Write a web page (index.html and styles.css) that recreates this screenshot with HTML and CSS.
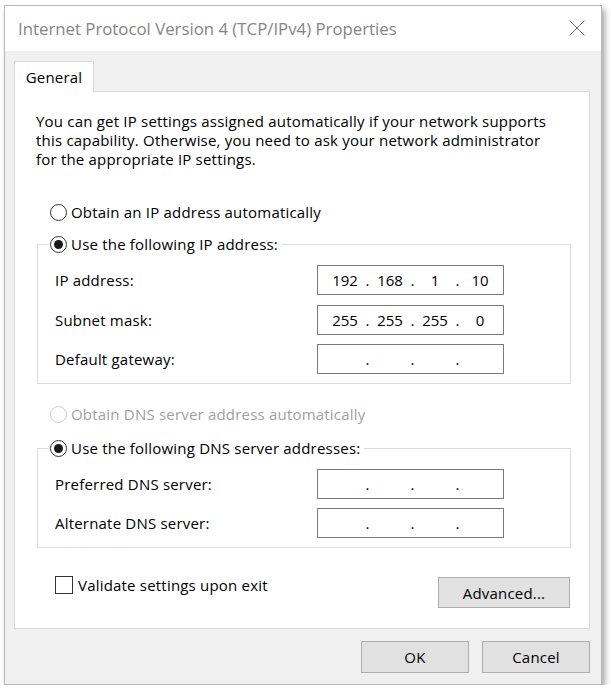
FILE: index.html
```html
<!DOCTYPE html>
<html>
<head>
<meta charset="utf-8">
<link rel="stylesheet" href="styles.css">
</head>
<body>
<div class="window">
  <div class="titlebar">
    <div class="title">Internet Protocol Version 4 (TCP/IPv4) Properties</div>
    <svg class="close" width="18" height="18" viewBox="0 0 18 18"><path d="M1.5 1.5 L16.5 16.5 M16.5 1.5 L1.5 16.5" stroke="#6b6b6b" stroke-width="1" fill="none"/></svg>
  </div>
  <div class="body">
    <div class="tabs"><div class="tab">General</div></div>
    <div class="panel">
      <p class="intro">You can get IP settings assigned automatically if your network supports this capability. Otherwise, you need to ask your network administrator for the appropriate IP settings.</p>
      <div class="radio-row first"><span class="radio"></span><span>Obtain an IP address automatically</span></div>
      <fieldset class="group g1">
        <legend><span class="radio on"></span><span>Use the following IP address:</span></legend>
        <div class="row"><span class="lbl">IP address:</span><div class="ip"><span class="n">192</span><span class="d">.</span><span class="n">168</span><span class="d">.</span><span class="n">1</span><span class="d">.</span><span class="n">10</span></div></div>
        <div class="row"><span class="lbl">Subnet mask:</span><div class="ip"><span class="n">255</span><span class="d">.</span><span class="n">255</span><span class="d">.</span><span class="n">255</span><span class="d">.</span><span class="n">0</span></div></div>
        <div class="row"><span class="lbl">Default gateway:</span><div class="ip"><span class="n"></span><span class="d">.</span><span class="n"></span><span class="d">.</span><span class="n"></span><span class="d">.</span><span class="n"></span></div></div>
      </fieldset>
      <div class="radio-row dns disabled"><span class="radio"></span><span>Obtain DNS server address automatically</span></div>
      <fieldset class="group g2">
        <legend><span class="radio on"></span><span>Use the following DNS server addresses:</span></legend>
        <div class="row"><span class="lbl">Preferred DNS server:</span><div class="ip"><span class="n"></span><span class="d">.</span><span class="n"></span><span class="d">.</span><span class="n"></span><span class="d">.</span><span class="n"></span></div></div>
        <div class="row"><span class="lbl">Alternate DNS server:</span><div class="ip"><span class="n"></span><span class="d">.</span><span class="n"></span><span class="d">.</span><span class="n"></span><span class="d">.</span><span class="n"></span></div></div>
      </fieldset>
      <div class="bottom">
        <div class="check-row"><span class="check"></span><span>Validate settings upon exit</span></div>
        <div class="btn adv">Advanced...</div>
      </div>
    </div>
    <div class="footer">
      <div class="btn">OK</div>
      <div class="btn">Cancel</div>
    </div>
  </div>
</div>
</body>
</html>
```

FILE: styles.css
```css
html, body { margin: 0; padding: 0; background: #ffffff; }
body {
  font-family: "Open Sans", "Noto Sans", "Liberation Sans", sans-serif;
  font-size: 15px;
  letter-spacing: 0.2px;
  color: #000;
}
.window {
  margin: 5px 0 0 4px;
  width: 596px;
  height: 678px;
  border: 1px solid #b9b9b9;
  box-shadow: 3px 4px 6px rgba(0,0,0,0.35);
  background: #f0f0f0;
  display: flex;
  flex-direction: column;
}
.titlebar {
  height: 45px;
  background: #fff;
  display: flex;
  align-items: center;
  justify-content: space-between;
  padding: 0 15px 0 13px;
  flex: none;
}
.title {
  font-size: 16.8px;
  letter-spacing: 0;
  color: #858585;
  margin-top: -1px;
}
.close { margin-top: -2px; }
.body {
  flex: 1;
  padding: 10px 11px 0 9px;
  display: flex;
  flex-direction: column;
}
.tabs { display: flex; height: 30px; position: relative; z-index: 1; }
.tab {
  width: 78px;
  height: 31px;
  border: 1px solid #d9d9d9;
  border-bottom: none;
  background: #fff;
  text-align: center;
  line-height: 30px;
  letter-spacing: 0.2px;
}
.panel {
  background: #fff;
  border: 1px solid #d9d9d9;
  height: 536px;
  padding: 0;
  display: flex;
  flex-direction: column;
}
.intro {
  margin: 20px 30px 0 21px;
  line-height: 19px;
}
.radio-row {
  display: flex;
  align-items: center;
  height: 20px;
  margin-left: 35px;
  gap: 4px;
}
.radio-row.first { margin-top: 33px; }
.radio {
  box-sizing: border-box;
  width: 17px;
  height: 17px;
  border: 1px solid #333;
  border-radius: 50%;
  background: #fff;
  display: inline-flex;
  align-items: center;
  justify-content: center;
  flex: none;
}
.radio.on::after {
  content: "";
  width: 9px;
  height: 9px;
  border-radius: 50%;
  background: #1a1a1a;
}
.disabled { color: #a0a0a0; }
.disabled .radio { border-color: #cccccc; }
.group {
  margin: 12px 18px 0 22px;
  border: 1px solid #dcdcdc;
  padding: 11px 0 9px 17px;
  min-width: 0;
}
.group legend {
  display: flex;
  align-items: center;
  gap: 4px;
  height: 20px;
  padding: 0 4px 0 1px;
  margin-left: -6px;
}
.row {
  display: flex;
  align-items: center;
  height: 30px;
}
.g1 .row + .row { margin-top: 9.5px; }
.g2 .row + .row { margin-top: 9px; }
.lbl { width: 262px; flex: none; }
.ip {
  box-sizing: border-box;
  width: 187px;
  height: 30px;
  border: 1px solid #7a7a7a;
  display: flex;
  align-items: center;
  padding-left: 9px;
  letter-spacing: 0;
}
.ip .n { width: 36px; text-align: center; }
.ip .d { width: 9px; text-align: center; }
.radio-row.dns { margin-top: 20px; }
.g2 { margin-top: 14px; }
.bottom {
  display: flex;
  justify-content: space-between;
  align-items: flex-start;
  margin: 29px 19px 0 40px;
}
.check-row {
  display: flex;
  align-items: center;
  gap: 5px;
  height: 20px;
  margin-top: -2px;
}
.check {
  box-sizing: border-box;
  width: 18px;
  height: 18px;
  border: 1px solid #333;
  background: #fff;
}
.btn {
  box-sizing: border-box;
  width: 108px;
  height: 32px;
  background: #e1e1e1;
  border: 1px solid #adadad;
  display: flex;
  align-items: center;
  justify-content: center;
}
.btn.adv { width: 132px; height: 31px; }
.footer {
  display: flex;
  justify-content: flex-end;
  gap: 13px;
  margin-top: 12px;
}
```
